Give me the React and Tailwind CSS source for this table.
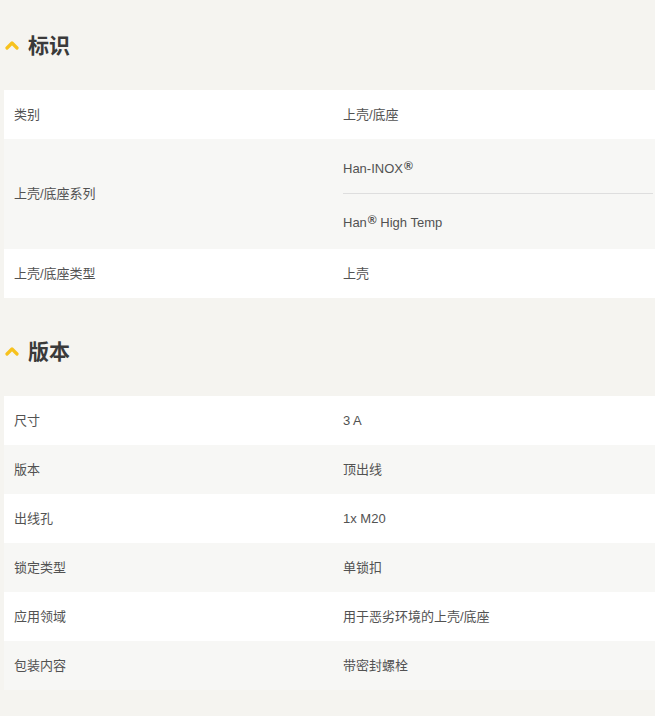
const font = { fontFamily: '"Liberation Sans", "Noto Sans CJK SC", sans-serif' };

const Chevron = () => (
  <svg width="14" height="10" viewBox="0 0 14 10" className="shrink-0">
    <path d="M2 8 L7 3 L12 8" fill="none" stroke="#f7c21d" strokeWidth="3.2" strokeLinecap="round" strokeLinejoin="round" />
  </svg>
);

const Reg = () => <sup className="text-[12px] font-bold relative -top-[3px] ml-[1px]">®</sup>;

const SectionHeader = ({ title, className = '' }) => (
  <div className={`h-[90px] flex items-center gap-[9px] pl-[1px] ${className}`}>
    <Chevron />
    <h2 className="text-[21px] font-bold text-[#3a3a3a] leading-none">{title}</h2>
  </div>
);

const Row = ({ label, children, alt }) => (
  <div className={`grid grid-cols-[329px_1fr] ${alt ? 'bg-[#f7f7f5]' : 'bg-white'}`}>
    <div className="flex items-center px-[10px] min-h-[49px]">{label}</div>
    <div className="flex items-center px-[10px] min-h-[49px]">{children}</div>
  </div>
);

const App = () => {
  return (
    <div className="min-h-[716px] bg-[#f5f4f0] text-[13px] text-[#525252] pl-[4px]" style={font}>
      <SectionHeader title="标识" />
      <div>
        <Row label="类别">上壳/底座</Row>
        <div className="grid grid-cols-[329px_1fr] bg-[#f7f7f5]">
          <div className="flex items-center px-[10px]">上壳/底座系列</div>
          <div className="flex flex-col">
            <div className="h-[54px] flex items-center pl-[10px] pt-[6px]">
              <span>Han-INOX<Reg /></span>
            </div>
            <div className="ml-[10px] mr-[2px] h-px bg-[#dedede]" />
            <div className="h-[55px] flex items-center pl-[10px] pt-[3px]">
              <span>Han<Reg /> High Temp</span>
            </div>
          </div>
        </div>
        <Row label="上壳/底座类型">上壳</Row>
      </div>

      <SectionHeader title="版本" className="mt-2" />
      <div>
        <Row label="尺寸">3 A</Row>
        <Row label="版本" alt>顶出线</Row>
        <Row label="出线孔">1x M20</Row>
        <Row label="锁定类型" alt>单锁扣</Row>
        <Row label="应用领域">用于恶劣环境的上壳/底座</Row>
        <Row label="包装内容" alt>带密封螺栓</Row>
      </div>
    </div>
  );
};

export default App;
